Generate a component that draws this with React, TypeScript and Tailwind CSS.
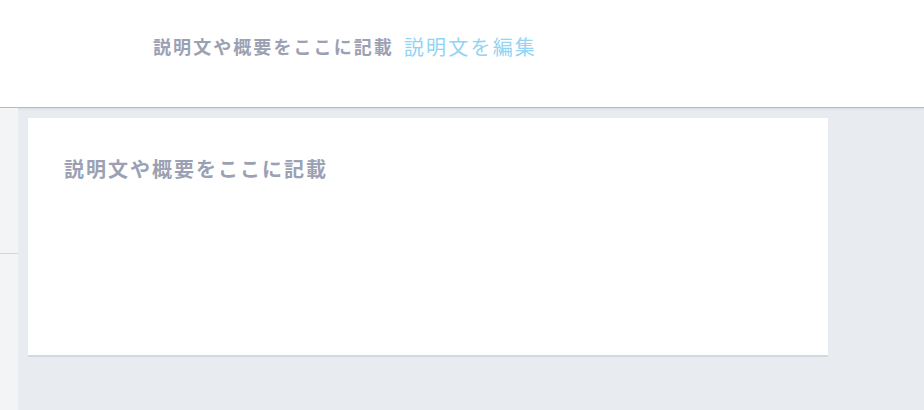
export default function App() {
  const font = { fontFamily: '"Noto Sans CJK JP", "Noto Sans", sans-serif' };
  return (
    <div className="flex h-[410px] w-[924px] flex-col overflow-hidden bg-[#e8ebf0]" style={font}>
      <header className="flex h-[108px] shrink-0 items-center border-b border-[#b6bac2] bg-white pb-[14px] pl-[153px] shadow-[0_1px_2px_rgba(0,0,0,0.08)]">
        <p className="text-[18px] font-bold tracking-[0.115em] text-[#9ba1b3]">説明文や概要をここに記載</p>
        <button className="ml-[10px] text-[20px] tracking-[0.11em] text-[#93d4f4]">説明文を編集</button>
      </header>

      <div className="flex flex-1">
        <aside className="w-[18px] shrink-0 bg-[#f3f4f6]">
          <div className="h-[146px] border-b border-[#d3d6dc]" />
        </aside>

        <main className="flex-1 pt-[10px] pl-[10px]">
          <section className="h-[239px] w-[800px] border-b-2 border-[#d3d9e2] bg-white px-[38px] pt-[36px]">
            <p className="-ml-[2px] text-[20px] font-bold tracking-[0.1em] text-[#9ba1b3]">説明文や概要をここに記載</p>
          </section>
        </main>
      </div>
    </div>
  );
}
